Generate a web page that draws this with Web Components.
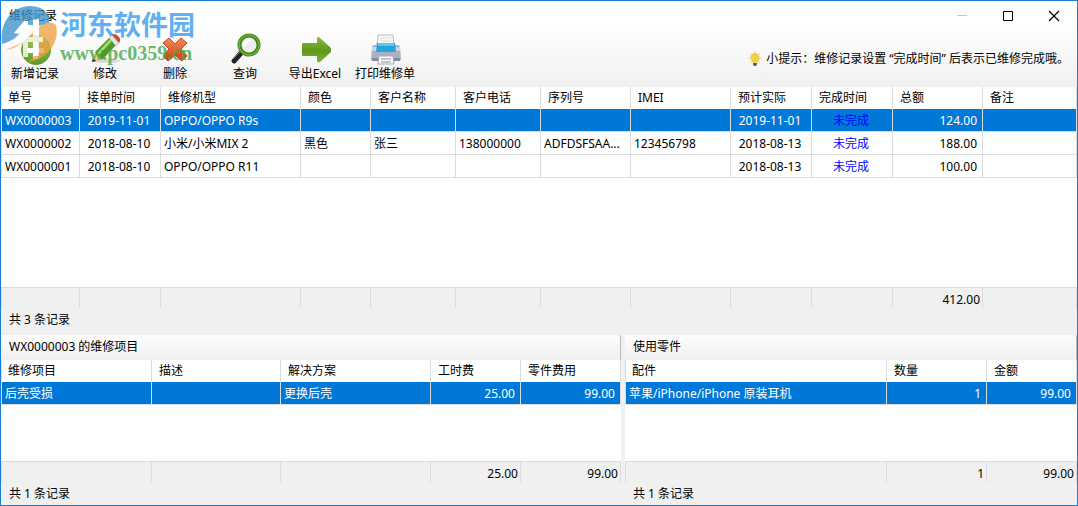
<!DOCTYPE html>
<html lang="zh-CN">
<head>
<meta charset="utf-8">
<title>维修记录</title>
<style>
  body { margin: 0; font: 12px/16px "Noto Sans", "Noto Sans CJK SC", sans-serif; color: #000; background: #f0f0f0; }
</style>
</head>
<body>
<repair-window></repair-window>

<template id="window-template">
  <style>
    :host { display: flex; flex-direction: column; position: relative; box-sizing: border-box; min-height: 100vh; border: 1px solid #1a7fd4; background: #f0f0f0; }
    main { flex: 1; display: flex; flex-direction: column; }
    .records { flex: 1; margin-bottom: 4px; }
    .details { display: flex; gap: 4px; }
    .items, .parts { display: flex; flex-direction: column; min-width: 0; }
    .items { flex: 620 1 0; }
    .parts { flex: 452 1 0; }
    site-watermark { position: absolute; left: 0; top: 0; pointer-events: none; }
  </style>
  <title-bar>维修记录</title-bar>
  <tool-bar>
    <tool-button icon="add">新增记录</tool-button>
    <tool-button icon="edit">修改</tool-button>
    <tool-button icon="delete">删除</tool-button>
    <tool-button icon="search">查询</tool-button>
    <tool-button icon="export">导出Excel</tool-button>
    <tool-button icon="print">打印维修单</tool-button>
    <span slot="tip">小提示：维修记录设置 “完成时间” 后表示已维修完成哦。</span>
  </tool-bar>
  <main>
    <data-grid class="records" name="records"></data-grid>
    <div class="details">
      <section class="items">
        <panel-title>WX0000003 的维修项目</panel-title>
        <data-grid name="items"></data-grid>
      </section>
      <section class="parts">
        <panel-title>使用零件</panel-title>
        <data-grid name="parts"></data-grid>
      </section>
    </div>
  </main>
  <site-watermark></site-watermark>
</template>

<template id="titlebar-template">
  <style>
    :host { display: flex; align-items: center; height: 30px; background: #fff; }
    .title { flex: 1; padding-left: 8px; }
    button { width: 46px; height: 30px; padding: 0; border: 0; background: none; display: grid; place-items: center; }
    svg { display: block; }
  </style>
  <span class="title"><slot></slot></span>
  <button aria-label="最小化" disabled><svg width="12" height="12"><path d="M1 5.500h10" stroke="#c8c8c8"/></svg></button>
  <button aria-label="最大化"><svg width="12" height="12"><path d="M1.500 1.500h9v9h-9z" fill="none" stroke="#000"/></svg></button>
  <button aria-label="关闭"><svg width="12" height="12"><path d="M1 1l10 10M11 1L1 11" stroke="#000" stroke-width="1.200"/></svg></button>
</template>

<template id="toolbar-template">
  <style>
    :host { display: flex; height: 56px; background: linear-gradient(#fdfdfd, #f6f6f6 60%, #f0f0f0); border-top-right-radius: 3px; }
    .tools { display: flex; flex: 1; }
    .tip { display: flex; align-items: center; gap: 4px; padding-right: 8px; white-space: nowrap; }
    svg { display: block; }
  </style>
  <div class="tools"><slot></slot></div>
  <div class="tip">
    <svg width="14" height="16" viewBox="0 0 14 16"><path d="M7 0v2M2 2l1.500 1.500M12 2l-1.500 1.500M0 7h2M12 7h2M2 12l1.500-1.500M12 12l-1.500-1.500" stroke="#efd983"/><path d="M7 2a4.700 4.700 0 0 0-4.700 4.700C2.300 9 4 9.500 4.600 11.800h4.800C10 9.500 11.700 9 11.700 6.700A4.700 4.700 0 0 0 7 2z" fill="#efcf45"/><path d="M5 12h4v1.500l-1 1.500H6l-1-1.500z" fill="#53617c"/></svg>
    <slot name="tip"></slot>
  </div>
</template>

<template id="toolbutton-template">
  <style>
    :host { display: block; width: 70px; }
    button { width: 70px; height: 56px; padding: 2px 2px 0 0; border: 0; background: none; color: inherit; font: inherit; display: flex; flex-direction: column; align-items: center; gap: 1px; white-space: nowrap; }
    .icon { width: 32px; height: 32px; }
    svg { display: block; }
  </style>
  <button><span class="icon"></span><slot></slot></button>
</template>

<template id="paneltitle-template">
  <style>
    :host { display: block; box-sizing: border-box; height: 25px; padding-left: 8px; line-height: 23px; background: linear-gradient(#fdfdfd, #f0f0f0); border-top-right-radius: 3px; border-right: 1px solid #bbb; }
  </style>
  <slot></slot>
</template>

<template id="grid-template">
  <style>
    :host { display: flex; flex-direction: column; }
    table { width: 100%; table-layout: fixed; border-spacing: 0; border-collapse: separate; border-left: 1px solid #dcdcdc; background: #fff; }
    th, td { box-sizing: border-box; border-right: 1px solid #dcdcdc; overflow: hidden; text-overflow: ellipsis; white-space: nowrap; line-height: 16px; }
    th { height: 22px; padding: 0 0 0 7px; font-weight: normal; text-align: left; }
    th:first-child { padding-left: 6px; }
    td { height: 23px; padding: 2px 5px 0 3px; border-bottom: 1px solid #dcdcdc; }
    .center { text-align: center; }
    .right { text-align: right; }
    .pending { text-align: center; color: #00f; }
    .selected td { background: #0078d7; color: #fff; }
    .selected .pending { color: #00f; }
    .space { flex: 1; min-height: 56px; background: #fff; }
    .totals { background: #f0f0f0; }
    .totals td { height: 21px; padding: 4px 2px 0 0; border-top: 1px solid #dcdcdc; border-bottom: 0; text-align: right; }
    footer { height: 23px; padding-left: 8px; line-height: 23px; }
  </style>
  <table class="rows"><colgroup></colgroup><thead><tr></tr></thead><tbody></tbody></table>
  <div class="space"></div>
  <table class="totals"><colgroup></colgroup><tbody><tr></tr></tbody></table>
  <footer></footer>
</template>

<template id="watermark-template">
  <style>
    :host { display: flex; align-items: flex-start; opacity: .78; }
    svg { display: block; }
    .words { padding-top: 8px; margin-left: 1px; }
    .name { color: #359aeb; font: bold 27px/30px "Noto Sans CJK SC", sans-serif; }
    .address { color: #45a948; font: bold 20px/28px "Liberation Serif", serif; }
  </style>
  <svg width="58" height="66" viewBox="0 0 58 66" aria-hidden="true">
    <path d="M1 43C-2 22 11 5 29 5c9 0 16 4 19 10v12c-5-3-10-3-14-1-3-3-8-3-12 1-4 8-10 13-21 16z" fill="#3d93cd"/>
    <path d="M4 49c9-1 15-5 21-11l12-11c6-5 13-7 18-3 4 16-7 34-28 37 8-6 12-14 11-23-5 2-8 1-11-1-6 5-14 9-23 12z" fill="#efa145"/>
    <path d="M13 32l10-12h4v16h5V19l6-2v19h4v5h-4v14h-6V41h-5v15h-5V30l-5 3z" fill="#fff"/>
  </svg>
  <div class="words"><div class="name">河东软件园</div><div class="address">www.pc0359.cn</div></div>
</template>

<script>
  const icons = {
    add: `<svg width="32" height="32" viewBox="0 0 32 32"><defs><linearGradient id="a" x2="0" y2="1"><stop stop-color="#9aca58"/><stop offset="1" stop-color="#5b9b24"/></linearGradient></defs><circle cx="17" cy="17" r="14.500" fill="url(#a)" stroke="#5d9630"/><path d="M14 9h5v6h6v5h-6v6h-5v-6H8v-5h6z" fill="#fff"/></svg>`,
    edit: `<svg width="32" height="32" viewBox="0 0 32 32"><ellipse cx="18" cy="28" rx="13" ry="2" fill="#000" opacity=".12"/><path d="M3 29l3-10 7 8z" fill="#efc994"/><path d="M3 29l1-4 3 3z" fill="#222"/><path d="M6 19L20 5l7 7-14 15z" fill="#4f9a22"/><path d="M8 20L21 6l2 2L9 23z" fill="#a9d775"/><path d="M20 5l3-3 7 8-3 3z" fill="#e4e4e4" stroke="#999" stroke-width=".5"/><path d="M23 2c2-2 4-1 6 1s3 4 1 7z" fill="#c9502b"/></svg>`,
    delete: `<svg width="32" height="32" viewBox="0 0 32 32"><defs><linearGradient id="d" x2="0" y2="1"><stop stop-color="#f58c59"/><stop offset="1" stop-color="#d33d0a"/></linearGradient></defs><path d="M10 5l6 6 6-6 6 5-6 6 6 7-5 5-7-6-7 6-5-5 6-7-6-6z" fill="url(#d)" stroke="#c84318" stroke-linejoin="round"/></svg>`,
    search: `<svg width="32" height="32" viewBox="0 0 32 32"><path d="M13 19L5 28" stroke="#222" stroke-width="5" stroke-linecap="round"/><path d="M11 19L4 26" stroke="#777" stroke-width="1"/><circle cx="20" cy="12" r="9.500" fill="#ededed" stroke="#4a8a1c" stroke-width="4"/><circle cx="20" cy="12" r="10" fill="none" stroke="#86b94b"/><path d="M14 11c1-4 5-5 9-4-4 2-7 5-8 9z" fill="#fff"/></svg>`,
    export: `<svg width="32" height="32" viewBox="0 0 32 32"><defs><linearGradient id="e" x2="0" y2="1"><stop stop-color="#8aba43"/><stop offset=".55" stop-color="#5d981a"/><stop offset="1" stop-color="#7cb43a"/></linearGradient></defs><path d="M3 11q0-1 1-1h14V5q1-2 3 0l12 11q1 1 0 2L21 29q-3 1-3-1v-5H4q-1 0-1-1z" fill="url(#e)"/></svg>`,
    print: `<svg width="32" height="32" viewBox="0 0 32 32"><path d="M3 14q0-2 3-2h22q3 0 3 2l1 12q0 2-2 2H4q-2 0-2-2z" fill="#aab1c2"/><path d="M3 14h28v4H3z" fill="#ced3df"/><path d="M3 25h28v3H3z" fill="#8289a0"/><path d="M9 2h15l1 11H8z" fill="#f8f8f8" stroke="#b8bcc5"/><path d="M11 5h11M11 8h11" stroke="#ddd"/><path d="M8 10h18l1 9H7z" fill="#24a4dd"/><path d="M9 10h16v3H9z" fill="#64c4ea"/><path d="M10 23h14l1 8H9z" fill="#fff" stroke="#a5a9b8"/><path d="M12 26h10M12 29h10" stroke="#858b9c"/></svg>`
  };

  /* Column: [heading, width in px (0 takes the remaining width), cell class] */
  const grids = {
    records: {
      columns: [["单号", 78], ["接单时间", 81, "center"], ["维修机型", 140], ["颜色", 70], ["客户名称", 85], ["客户电话", 85], ["序列号", 90], ["IMEI", 100], ["预计实际", 81, "center"], ["完成时间", 81, "pending"], ["总额", 90, "right"], ["备注", 0]],
      rows: [
        ["WX0000003", "2019-11-01", "OPPO/OPPO R9s", "", "", "", "", "", "2019-11-01", "未完成", "124.00", ""],
        ["WX0000002", "2018-08-10", "小米/小米MIX 2", "黑色", "张三", "138000000", "ADFDSFSAA...", "123456798", "2018-08-13", "未完成", "188.00", ""],
        ["WX0000001", "2018-08-10", "OPPO/OPPO R11", "", "", "", "", "", "2018-08-13", "未完成", "100.00", ""]
      ],
      totals: { 10: "412.00" }
    },
    items: {
      columns: [["维修项目", 150], ["描述", 129], ["解决方案", 0], ["工时费", 90, "right"], ["零件费用", 100, "right"]],
      rows: [["后壳受损", "", "更换后壳", "25.00", "99.00"]],
      totals: { 3: "25.00", 4: "99.00" }
    },
    parts: {
      columns: [["配件", 0], ["数量", 100, "right"], ["金额", 90, "right"]],
      rows: [["苹果/iPhone/iPhone 原装耳机", "1", "99.00"]],
      totals: { 1: "1", 2: "99.00" }
    }
  };

  class TemplateElement extends HTMLElement {
    constructor() {
      super();
      this.attachShadow({ mode: "open" }).append(
        document.getElementById(this.constructor.template).content.cloneNode(true));
    }
  }

  class TitleBar extends TemplateElement { static template = "titlebar-template"; }
  class ToolBar extends TemplateElement { static template = "toolbar-template"; }
  class PanelTitle extends TemplateElement { static template = "paneltitle-template"; }
  class SiteWatermark extends TemplateElement { static template = "watermark-template"; }
  class RepairWindow extends TemplateElement { static template = "window-template"; }

  class ToolButton extends TemplateElement {
    static template = "toolbutton-template";
    connectedCallback() {
      this.shadowRoot.querySelector(".icon").innerHTML = icons[this.getAttribute("icon")];
    }
  }

  class DataGrid extends TemplateElement {
    static template = "grid-template";
    connectedCallback() {
      const { columns, rows, totals } = grids[this.getAttribute("name")];
      const find = selector => this.shadowRoot.querySelector(selector);
      const cols = columns.map(([, width]) => width ? `<col style="width:${width}px">` : "<col>").join("");
      this.shadowRoot.querySelectorAll("colgroup").forEach(group => { group.innerHTML = cols; });
      find("thead tr").innerHTML = columns.map(([label]) => `<th scope="col">${label}</th>`).join("");
      find(".rows tbody").innerHTML = rows.map((row, r) =>
        `<tr class="${r ? "" : "selected"}">${row.map((text, c) => `<td class="${columns[c][2] || ""}">${text}</td>`).join("")}</tr>`).join("");
      find(".totals tr").innerHTML = columns.map((_, c) => `<td>${totals[c] || ""}</td>`).join("");
      find("footer").textContent = `共 ${rows.length} 条记录`;
    }
  }

  customElements.define("title-bar", TitleBar);
  customElements.define("tool-bar", ToolBar);
  customElements.define("tool-button", ToolButton);
  customElements.define("panel-title", PanelTitle);
  customElements.define("data-grid", DataGrid);
  customElements.define("site-watermark", SiteWatermark);
  customElements.define("repair-window", RepairWindow);
</script>
</body>
</html>
